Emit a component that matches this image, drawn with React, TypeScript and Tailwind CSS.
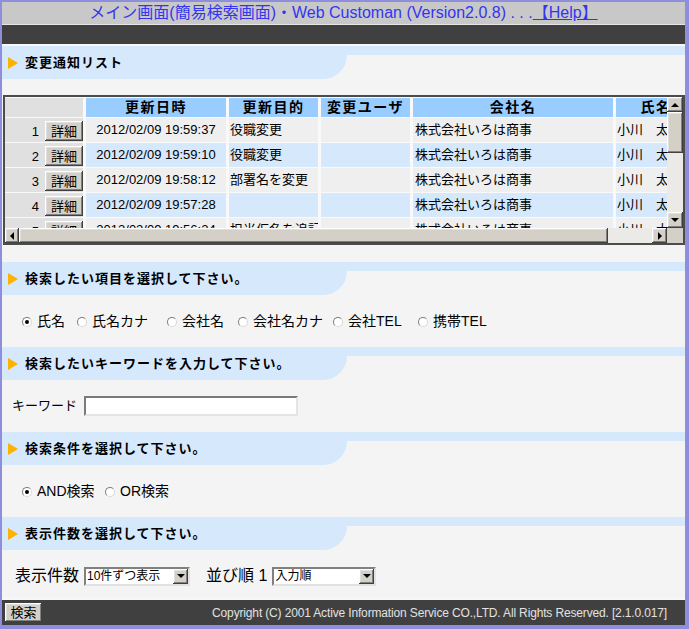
import React from 'react';

type Row = {
  no: number;
  date: string;
  purpose: string;
  user: string;
  company: string;
  name: string;
};

const rows: Row[] = [
  { no: 1, date: '2012/02/09 19:59:37', purpose: '役職変更', user: '', company: '株式会社いろは商事', name: '小川　太郎' },
  { no: 2, date: '2012/02/09 19:59:10', purpose: '役職変更', user: '', company: '株式会社いろは商事', name: '小川　太郎' },
  { no: 3, date: '2012/02/09 19:58:12', purpose: '部署名を変更', user: '', company: '株式会社いろは商事', name: '小川　太郎' },
  { no: 4, date: '2012/02/09 19:57:28', purpose: '', user: '', company: '株式会社いろは商事', name: '小川　太郎' },
  { no: 5, date: '2012/02/09 19:56:24', purpose: '担当仮名を追記', user: '', company: '株式会社いろは商事', name: '小川　太郎' },
];

// windows classic 3d button look
const bevel =
  'bg-[#d4d0c8] shadow-[inset_-1px_-1px_#404040,inset_1px_1px_#ffffff,inset_-2px_-2px_#808080,inset_2px_2px_#dfdfdf]';

function Triangle() {
  return <span className="h-0 w-0 shrink-0 border-y-[6px] border-l-[10px] border-y-transparent border-l-[#fdb200]" />;
}

function SectionHeader({ title }: { title: string }) {
  return (
    <div className="bg-[linear-gradient(#d5e8fc_9px,transparent_9px)]">
      <div className="flex h-[33px] w-[345px] items-center rounded-br-[24px] bg-[#d5e8fc] pl-[6px]">
        <Triangle />
        <span className="ml-[7px] text-[13px] font-bold tracking-[1px]">{title}</span>
      </div>
    </div>
  );
}

function Radio({ checked }: { checked?: boolean }) {
  return (
    <span className="flex h-[10px] w-[10px] shrink-0 items-center justify-center rounded-full border border-t-[#7c7c7c] border-r-[#d8d8d8] border-b-[#d8d8d8] border-l-[#7c7c7c] bg-white">
      {checked && <span className="h-[4px] w-[4px] rounded-full bg-black" />}
    </span>
  );
}

function RadioItem({ label, checked, className }: { label: string; checked?: boolean; className?: string }) {
  return (
    <label className={`flex items-center gap-[5px] text-[14px] ${className ?? ''}`}>
      <Radio checked={checked} />
      <span>{label}</span>
    </label>
  );
}

function Arrow({ dir }: { dir: 'up' | 'down' | 'left' | 'right' }) {
  if (dir === 'up') return <span className="h-0 w-0 border-x-[4px] border-b-[4px] border-x-transparent border-b-black" />;
  if (dir === 'down') return <span className="h-0 w-0 border-x-[4px] border-t-[4px] border-x-transparent border-t-black" />;
  if (dir === 'left') return <span className="h-0 w-0 border-y-[4px] border-r-[4px] border-y-transparent border-r-black" />;
  return <span className="h-0 w-0 border-y-[4px] border-l-[4px] border-y-transparent border-l-black" />;
}

function Select({ value, className }: { value: string; className: string }) {
  return (
    <div
      className={`flex h-[19px] items-stretch border-2 border-t-[#808080] border-r-[#e2e2e2] border-b-[#e2e2e2] border-l-[#808080] bg-white ${className}`}
    >
      <span className="flex-1 overflow-hidden whitespace-nowrap pl-[1px] text-[12px] leading-[15px]">{value}</span>
      <span className={`flex w-[15px] items-center justify-center ${bevel}`}>
        <Arrow dir="down" />
      </span>
    </div>
  );
}

function ChangeList() {
  return (
    <div className="mt-[16px] ml-[1px] flex h-[150px] flex-col border-2 border-[#4c4c4c] bg-[#f9f9f9]">
      <div className="flex h-[131px]">
        <div className="flex-1 overflow-hidden pt-[1px]">
          <div className="grid grid-cols-[78px_140px_89px_89px_200px_80px] grid-rows-[19px] auto-rows-[24px] gap-x-[3px] gap-y-[1px] whitespace-nowrap text-[13px]">
            <div className="bg-[#e0e0e0]" />
            {['更新日時', '更新目的', '変更ユーザ', '会社名', '氏名'].map((h) => (
              <div key={h} className="flex items-center justify-center overflow-hidden bg-[#99ccff] text-[14px] font-bold tracking-[1.5px]">
                {h}
              </div>
            ))}
            {rows.map((r) => {
              const bg = r.no % 2 === 0 ? 'bg-[#d5e8fc]' : 'bg-[#efefef]';
              return (
                <React.Fragment key={r.no}>
                  <div className="flex items-center justify-end bg-[#e0e0e0]">
                    <span className="mt-[3px] mr-[6px]">{r.no}</span>
                    <button className={`mt-[2px] h-[20px] w-[38px] text-[13px] leading-none ${bevel}`}>詳細</button>
                  </div>
                  <div className={`flex items-center justify-center overflow-hidden ${bg}`}>{r.date}</div>
                  <div className={`flex items-center overflow-hidden pl-[1px] ${bg}`}>{r.purpose}</div>
                  <div className={`flex items-center overflow-hidden pl-[2px] ${bg}`}>{r.user}</div>
                  <div className={`flex items-center overflow-hidden pl-[2px] ${bg}`}>{r.company}</div>
                  <div className={`flex items-center overflow-hidden pl-[1px] ${bg}`}>{r.name}</div>
                </React.Fragment>
              );
            })}
          </div>
        </div>
        {/* vertical scrollbar */}
        <div className="flex w-[16px] flex-col bg-[#ebeae6]">
          <span className={`flex h-[15px] items-center justify-center ${bevel}`}>
            <Arrow dir="up" />
          </span>
          <span className={`h-[41px] ${bevel}`} />
          <span className="flex-1" />
          <span className={`flex h-[16px] items-center justify-center ${bevel}`}>
            <Arrow dir="down" />
          </span>
        </div>
      </div>
      {/* horizontal scrollbar */}
      <div className="flex h-[15px] bg-[#ebeae6]">
        <span className={`flex w-[14px] items-center justify-center ${bevel}`}>
          <Arrow dir="left" />
        </span>
        <span className={`w-[589px] ${bevel}`} />
        <span className="flex-1" />
        <span className={`flex w-[15px] items-center justify-center ${bevel}`}>
          <Arrow dir="right" />
        </span>
        <span className="w-[16px] bg-[#d4d0c8]" />
      </div>
    </div>
  );
}

export default function App() {
  return (
    <div className="flex h-[629px] w-[689px] flex-col border-t-2 border-r-4 border-b-4 border-l-2 border-[#8e8edc] bg-[#f4f4f4] font-['Liberation_Sans','Noto_Sans_CJK_JP',sans-serif] text-black">
      {/* title bar */}
      <div className="flex h-[23px] items-center justify-center border-b border-[#e6e6e6] bg-[#c8c8c8] text-[16px] leading-none text-[#3434f2]">
        <span>メイン画面(簡易検索画面)・Web Customan (Version2.0.8) . . . </span>
        <a className="underline">【Help】</a>
      </div>
      <div className="h-[21px] border-b-2 border-[#f7f7f7] bg-[#404040]" />

      <SectionHeader title="変更通知リスト" />
      <ChangeList />

      <div className="mt-[17px]">
        <SectionHeader title="検索したい項目を選択して下さい。" />
      </div>
      <div className="flex h-[52px] items-center pt-[1px] pl-[20px]">
        <RadioItem className="w-[55px]" label="氏名" checked />
        <RadioItem className="w-[90px]" label="氏名カナ" />
        <RadioItem className="w-[71px]" label="会社名" />
        <RadioItem className="w-[95px]" label="会社名カナ" />
        <RadioItem className="w-[85px]" label="会社TEL" />
        <RadioItem label="携帯TEL" />
      </div>

      <SectionHeader title="検索したいキーワードを入力して下さい。" />
      <div className="flex h-[52px] items-center pl-[10px]">
        <span className="w-[72px] text-[13px]">キーワード</span>
        <input className="h-[20px] w-[214px] border-2 border-t-[#7a7a7a] border-r-[#e4e4e4] border-b-[#e4e4e4] border-l-[#7a7a7a] bg-white px-[2px] text-[13px] outline-none" />
      </div>

      <SectionHeader title="検索条件を選択して下さい。" />
      <div className="flex h-[52px] items-center pt-[1px] pl-[20px]">
        <RadioItem className="w-[83px]" label="AND検索" checked />
        <RadioItem label="OR検索" />
      </div>

      <SectionHeader title="表示件数を選択して下さい。" />
      <div className="flex h-[48px] items-center pt-[4px] pl-[13px] text-[16px]">
        <span className="mr-[5px]">表示件数</span>
        <Select className="w-[106px]" value="10件ずつ表示" />
        <span className="mr-[5px] ml-[16px]">並び順 1</span>
        <Select className="w-[104px]" value="入力順" />
      </div>

      {/* footer */}
      <div className="flex h-[27px] items-center justify-between border-t-2 border-[#f7f7f7] bg-[#404040] pr-[18px] pl-[3px]">
        <button className={`h-[19px] w-[37px] text-[13px] leading-none ${bevel}`}>検索</button>
        <span className="text-[12px] tracking-[-0.15px] text-[#e2e2e2]">
          Copyright (C) 2001 Active Information Service CO.,LTD. All Rights Reserved. [2.1.0.017]
        </span>
      </div>
    </div>
  );
}
